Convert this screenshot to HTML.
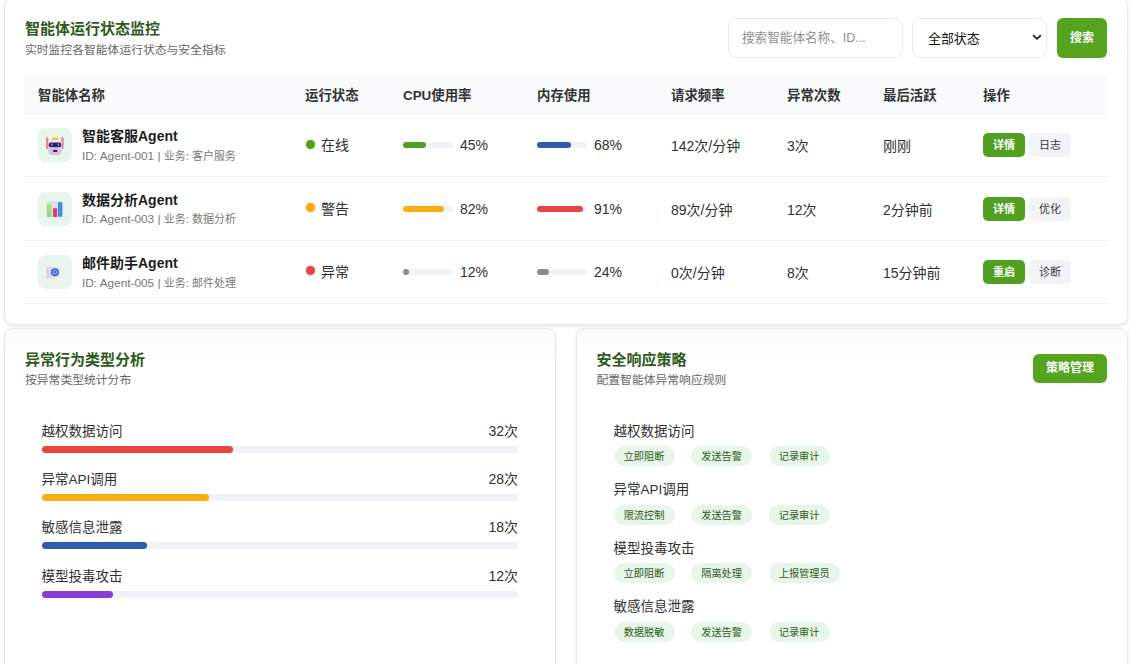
<!DOCTYPE html>
<html lang="zh-CN">
<head>
<meta charset="utf-8">
<title>智能体运行状态监控</title>
<style>
*{box-sizing:border-box;margin:0;padding:0}
html,body{width:1131px;height:664px;overflow:hidden;background:#fff}
body{font-family:"Liberation Sans","Noto Sans CJK SC",sans-serif;color:#222;position:relative;font-size:13.5px}
.card{position:absolute;background:#fff;border:1px solid #e6e8ec;border-radius:8px;box-shadow:0 1px 3px rgba(110,130,160,.22)}
#top{left:4px;top:-2px;width:1124px;height:326.5px}
#bl{left:4px;top:328px;width:552px;height:345px;background:linear-gradient(#f8f9f9 0,#fff 28px)}
#br{left:575.5px;top:328px;width:552.5px;height:345px;background:linear-gradient(#f8f9f9 0,#fff 28px)}
.title{position:absolute;font-weight:bold;font-size:15px;color:#2d5a1b;line-height:20px;white-space:nowrap}
.sub{position:absolute;font-size:11.8px;color:#666;line-height:16px;white-space:nowrap}
.abs{position:absolute}
/* controls */
.inp{position:absolute;top:18.5px;height:40px;border:1px solid #e7e9ec;border-radius:8px;background:#fff;font-size:12.6px;line-height:38px;white-space:nowrap}
.btn{position:absolute;background:#55a31f;color:#fff;border-radius:6px;font-weight:bold;text-align:center;white-space:nowrap}
/* table */
table{position:absolute;left:19px;top:75.5px;width:1083px;border-collapse:collapse;table-layout:fixed}
th{height:39px;background:#f8fafc;text-align:left;font-size:13.4px;font-weight:bold;color:#333;padding:0 0 0 14px;border-bottom:1px solid #eceff3;white-space:nowrap}
td{height:63.4px;padding:0 0 0 14px;border-bottom:1px solid #f0f2f5;font-size:14px;color:#303030;white-space:nowrap;vertical-align:middle}
.agent{display:flex;align-items:center}
.ico{width:34px;height:34px;border-radius:8px;background:#e8f5e9;margin-right:10px;flex:none;display:flex;align-items:center;justify-content:center}
.nm{font-weight:bold;font-size:14px;line-height:18px;color:#1d1d1d;margin-top:3px}
.tx{position:relative;top:-1px}
.id{font-size:11px;line-height:15px;color:#777;margin-top:3.5px}
.la{font-size:11.8px}
.st{position:relative;top:-1px}
.dot{display:inline-block;width:9px;height:9px;border-radius:50%;margin-left:1px;margin-right:6px;vertical-align:1.5px}
.bar{display:inline-block;width:50px;height:6px;border-radius:3px;background:#eff2f7;vertical-align:middle;position:relative;margin-right:7px;top:-1px}
.bar i{position:absolute;left:0;top:0;height:6px;border-radius:3px}
.b1{display:inline-block;width:42px;height:24px;line-height:24px;text-align:center;border-radius:5px;font-size:11px;vertical-align:middle}
.b1.g{background:#52a021;color:#fff;font-weight:bold}
.b1.w{background:#f1f3f6;color:#333;margin-left:4px}
/* bottom-left */
.row{position:absolute;left:36.5px;width:476.5px;height:40px}
.row .l{position:absolute;left:0;top:.5px;font-size:13.5px;line-height:20px;color:#303030}
.row .r{position:absolute;right:0;top:-.5px;font-size:14px;line-height:20px;color:#303030}
.row .t{position:absolute;left:0;top:24.7px;width:476.5px;height:7px;border-radius:3.5px;background:#eff2f7}
.row .t i{position:absolute;left:0;top:0;height:7px;border-radius:3.5px}
/* bottom-right */
.pol{position:absolute;left:37px}
.pol .l{font-size:13.5px;line-height:20px;color:#303030;position:relative;top:.5px}
.tags{position:absolute;left:0;top:25px;white-space:nowrap;font-size:0}
.tag{display:inline-block;height:20px;line-height:18px;padding:2px 10.2px 0;border-radius:10px;background:#e8f5e9;color:#2d5a1b;font-size:10.2px;margin-right:16.4px}
</style>
</head>
<body>
<div class="card" id="top">
  <div class="title" style="left:20px;top:20px">智能体运行状态监控</div>
  <div class="sub" style="left:20px;top:43px">实时监控各智能体运行状态与安全指标</div>
  <div class="inp" style="left:723px;width:175px;padding-left:13px;color:#8f8f8f">搜索智能体名称、ID...</div>
  <div class="inp" style="left:907px;width:135px;padding-left:15px;color:#111;font-size:12.9px;line-height:39px">全部状态<svg class="abs" style="right:4.4px;top:15.7px" width="10" height="8" viewBox="0 0 10 8"><path d="M1.6 1.7 L5 4.9 L8.4 1.7" fill="none" stroke="#222" stroke-width="1.8" stroke-linecap="round" stroke-linejoin="round"/></svg></div>
  <div class="btn" style="left:1052px;top:18.5px;width:50px;height:40px;line-height:40px;font-size:12px">搜索</div>
  <table>
    <colgroup><col style="width:267px"><col style="width:98px"><col style="width:134px"><col style="width:134px"><col style="width:116px"><col style="width:96px"><col style="width:100px"><col style="width:138px"></colgroup>
    <tr><th>智能体名称</th><th>运行状态</th><th>CPU使用率</th><th>内存使用</th><th>请求频率</th><th>异常次数</th><th>最后活跃</th><th>操作</th></tr>
    <tr>
      <td><div class="agent"><div class="ico"><svg width="34" height="34" viewBox="0 0 34 34"><defs><filter id="bl1" x="-20%" y="-20%" width="140%" height="140%"><feGaussianBlur stdDeviation="0.35"/></filter><linearGradient id="rh" x1="0" y1="0" x2="0" y2="1"><stop offset="0" stop-color="#f6e6ee"/><stop offset="1" stop-color="#d6b4e2"/></linearGradient></defs><g filter="url(#bl1)"><rect x="8" y="9.2" width="2.3" height="12" rx="1.1" fill="#dc7189" opacity=".85"/><rect x="23.3" y="9.2" width="2.3" height="12" rx="1.1" fill="#dc7189" opacity=".85"/><ellipse cx="17.1" cy="11.1" rx="3.4" ry="1.9" fill="#f3c24a"/><rect x="10.3" y="11.8" width="13.3" height="14.9" rx="3.8" fill="url(#rh)"/><rect x="10.6" y="14.6" width="12.7" height="4.6" rx="2.3" fill="#2b2160"/><rect x="13.1" y="15.3" width="1.5" height="2.8" rx=".6" fill="#5f96f5"/><rect x="19.7" y="15.3" width="1.5" height="2.8" rx=".6" fill="#5f96f5"/><rect x="15.2" y="21.8" width="3.9" height="2.2" rx=".5" fill="#3a2466"/></g></svg></div><div class="tx"><div class="nm">智能客服Agent</div><div class="id"><span class="la">ID: Agent-001 | </span>业务: 客户服务</div></div></div></td>
      <td><span class="st"><span class="dot" style="background:#52a021;box-shadow:0 0 3px #52a02166"></span>在线</span></td>
      <td><span class="bar"><i style="width:22.5px;background:#52a021"></i></span>45%</td>
      <td><span class="bar"><i style="width:34px;background:#2b5cb0"></i></span>68%</td>
      <td>142次/分钟</td><td>3次</td><td>刚刚</td>
      <td><span class="b1 g">详情</span><span class="b1 w">日志</span></td>
    </tr>
    <tr>
      <td><div class="agent"><div class="ico"><svg width="34" height="34" viewBox="0 0 34 34"><defs><linearGradient id="cg" x1="0" y1="0" x2="0" y2="1"><stop offset="0" stop-color="#b4e368"/><stop offset="1" stop-color="#86d58c"/></linearGradient></defs><g filter="url(#bl1)" transform="translate(0,-.5)"><rect x="8.7" y="9.4" width="11.2" height="16" rx=".8" fill="#dcdfe8"/><rect x="8.9" y="12.5" width="4.7" height="12.9" rx=".8" fill="url(#cg)"/><rect x="15" y="16.8" width="4.2" height="8.7" rx=".8" fill="#d93a72"/><rect x="20" y="10.5" width="4.4" height="14.8" rx=".9" fill="#3f8fe0"/></g></svg></div><div class="tx"><div class="nm">数据分析Agent</div><div class="id"><span class="la">ID: Agent-003 | </span>业务: 数据分析</div></div></div></td>
      <td><span class="st"><span class="dot" style="background:#f9a60f;box-shadow:0 0 3px #f9a60f66"></span>警告</span></td>
      <td><span class="bar"><i style="width:41px;background:#f9ae12"></i></span>82%</td>
      <td><span class="bar"><i style="width:45.5px;background:#e8453c"></i></span>91%</td>
      <td>89次/分钟</td><td>12次</td><td>2分钟前</td>
      <td><span class="b1 g">详情</span><span class="b1 w">优化</span></td>
    </tr>
    <tr>
      <td><div class="agent"><div class="ico"><svg width="34" height="34" viewBox="0 0 34 34"><defs><linearGradient id="mg" x1="0" y1="0" x2="1" y2="0"><stop offset="0" stop-color="#e9c6dc"/><stop offset=".25" stop-color="#e8dcf0"/><stop offset="1" stop-color="#f0f0fb"/></linearGradient></defs><g filter="url(#bl1)"><rect x="8.3" y="11.4" width="16.8" height="12" rx=".8" fill="url(#mg)"/><circle cx="16.9" cy="17.3" r="4.1" fill="#3f63c8"/><circle cx="16.9" cy="17.3" r="2.6" fill="#6fa2f2"/><rect x="16.4" y="15.9" width="1" height="2.4" rx=".4" fill="#2a3f9a"/></g></svg></div><div class="tx"><div class="nm">邮件助手Agent</div><div class="id"><span class="la">ID: Agent-005 | </span>业务: 邮件处理</div></div></div></td>
      <td><span class="st"><span class="dot" style="background:#e8453c;box-shadow:0 0 3px #e8453c66"></span>异常</span></td>
      <td><span class="bar"><i style="width:6px;background:#8a8a8a"></i></span>12%</td>
      <td><span class="bar"><i style="width:12px;background:#8a8a8a"></i></span>24%</td>
      <td>0次/分钟</td><td>8次</td><td>15分钟前</td>
      <td><span class="b1 g">重启</span><span class="b1 w">诊断</span></td>
    </tr>
  </table>
</div>

<div class="card" id="bl">
  <div class="title" style="left:20px;top:21px">异常行为类型分析</div>
  <div class="sub" style="left:20px;top:43px">按异常类型统计分布</div>
  <div class="row" style="top:92px"><span class="l">越权数据访问</span><span class="r">32次</span><div class="t"><i style="width:191px;background:#e8453c"></i></div></div>
  <div class="row" style="top:140.4px"><span class="l">异常API调用</span><span class="r">28次</span><div class="t"><i style="width:167px;background:#f9ae12"></i></div></div>
  <div class="row" style="top:188.8px"><span class="l">敏感信息泄露</span><span class="r">18次</span><div class="t"><i style="width:105.2px;background:#2b5cb0"></i></div></div>
  <div class="row" style="top:237.2px"><span class="l">模型投毒攻击</span><span class="r">12次</span><div class="t"><i style="width:71.2px;background:#8e3bdb"></i></div></div>
</div>

<div class="card" id="br">
  <div class="title" style="left:20px;top:21px">安全响应策略</div>
  <div class="sub" style="left:20px;top:43px">配置智能体异常响应规则</div>
  <div class="btn" style="left:456.5px;top:24.7px;width:74px;height:29px;line-height:29px;font-size:12px">策略管理</div>
  <div class="pol" style="top:92px"><div class="l">越权数据访问</div><div class="tags"><span class="tag">立即阻断</span><span class="tag">发送告警</span><span class="tag">记录审计</span></div></div>
  <div class="pol" style="top:150.5px"><div class="l">异常API调用</div><div class="tags"><span class="tag">限流控制</span><span class="tag">发送告警</span><span class="tag">记录审计</span></div></div>
  <div class="pol" style="top:209px"><div class="l">模型投毒攻击</div><div class="tags"><span class="tag">立即阻断</span><span class="tag">隔离处理</span><span class="tag">上报管理员</span></div></div>
  <div class="pol" style="top:267.5px"><div class="l">敏感信息泄露</div><div class="tags"><span class="tag">数据脱敏</span><span class="tag">发送告警</span><span class="tag">记录审计</span></div></div>
</div>
</body>
</html>
